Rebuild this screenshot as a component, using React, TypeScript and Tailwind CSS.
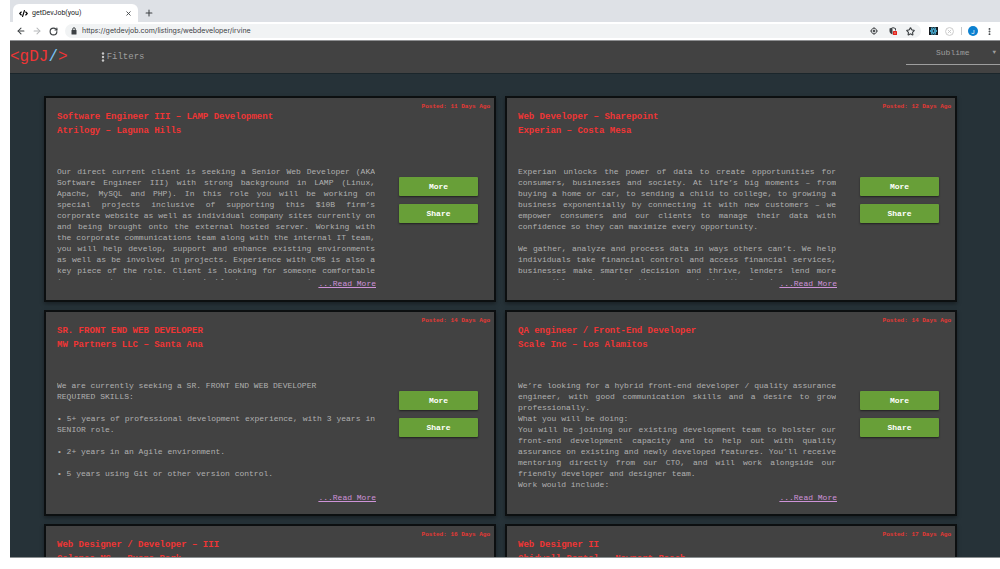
import { MoreVertical, ArrowLeft, ArrowRight, RotateCw, X, Plus, Star, CodeXml } from "lucide-react";

type Job = {
  title: string;
  company: string;
  days: number;
  body: string[];
};

const jobs: Job[] = [
  {
    title: "Software Engineer III – LAMP Development",
    company: "Atrilogy – Laguna Hills",
    days: 11,
    body: [
      "Our direct current client is seeking a Senior Web Developer (AKA Software Engineer III) with strong background in LAMP (Linux, Apache, MySQL and PHP). In this role you will be working on special projects inclusive of supporting this $10B firm’s corporate website as well as individual company sites currently on and being brought onto the external hosted server. Working with the corporate communications team along with the internal IT team, you will help develop, support and enhance existing environments as well as be involved in projects. Experience with CMS is also a key piece of the role. Client is looking for someone comfortable in an open team environment and able to manage a varied workload.",
    ],
  },
  {
    title: "Web Developer – Sharepoint",
    company: "Experian – Costa Mesa",
    days: 12,
    body: [
      "Experian unlocks the power of data to create opportunities for consumers, businesses and society. At life’s big moments – from buying a home or car, to sending a child to college, to growing a business exponentially by connecting it with new customers – we empower consumers and our clients to manage their data with confidence so they can maximize every opportunity.",
      "",
      "We gather, analyze and process data in ways others can’t. We help individuals take financial control and access financial services, businesses make smarter decision and thrive, lenders lend more responsibly, and organizations prevent identity fraud and crime.",
    ],
  },
  {
    title: "SR. FRONT END WEB DEVELOPER",
    company: "MW Partners LLC – Santa Ana",
    days: 14,
    body: [
      "We are currently seeking a SR. FRONT END WEB DEVELOPER",
      "REQUIRED SKILLS:",
      "",
      "• 5+ years of professional development experience, with 3 years in SENIOR role.",
      "",
      "• 2+ years in an Agile environment.",
      "",
      "• 5 years using Git or other version control.",
    ],
  },
  {
    title: "QA engineer / Front-End Developer",
    company: "Scale Inc – Los Alamitos",
    days: 14,
    body: [
      "We’re looking for a hybrid front-end developer / quality assurance engineer, with good communication skills and a desire to grow professionally.",
      "What you will be doing:",
      "You will be joining our existing development team to bolster our front-end development capacity and to help out with quality assurance on existing and newly developed features. You’ll receive mentoring directly from our CTO, and will work alongside our friendly developer and designer team.",
      "Work would include:",
    ],
  },
  {
    title: "Web Designer / Developer – III",
    company: "Calence MS – Buena Park",
    days: 16,
    body: [],
  },
  {
    title: "Web Designer II",
    company: "Chidwell Dental – Newport Beach",
    days: 17,
    body: [],
  },
];

function BrowserChrome() {
  return (
    <div className="shrink-0 bg-[#dee1e6] font-['Roboto',sans-serif] text-[#3c4043]">
      <div className="flex h-[22px] items-end">
        <div className="ml-[3px] flex h-[18px] w-[125px] items-center rounded-t-md bg-white px-[6px] text-[7px]">
          <CodeXml size={9} strokeWidth={3} className="text-black" />
          <span className="ml-1 flex-1 text-[#202124]">getDevJob(you)</span>
          <button aria-label="Close tab">
            <X size={7} strokeWidth={3} />
          </button>
        </div>
        <button aria-label="New tab" className="ml-[6px] flex h-[18px] items-center">
          <Plus size={10} strokeWidth={2.5} />
        </button>
      </div>
      <div className="flex h-[19px] items-center border-b border-[#8f9092] bg-white px-[6px]">
        <button aria-label="Back"><ArrowLeft size={10} strokeWidth={2.5} /></button>
        <button aria-label="Forward" className="ml-[6px] text-[#b6b8ba]"><ArrowRight size={10} strokeWidth={2.5} /></button>
        <button aria-label="Reload" className="ml-[7px]"><RotateCw size={9} strokeWidth={3} /></button>
        <div className="ml-[7px] flex h-[14px] flex-1 items-center rounded-full bg-[#f1f3f4] px-[6px]">
          <svg viewBox="0 0 12 16" className="h-2 w-[6px]">
            <rect x="1" y="6" width="10" height="9" rx="1" fill="#3c4043" />
            <path d="M3.5 7V4a2.5 2.5 0 0 1 5 0v3" fill="none" stroke="#3c4043" strokeWidth="2" />
          </svg>
          <input
            aria-label="Address"
            readOnly
            value="https://getdevjob.com/listings/webdeveloper/irvine"
            className="ml-[5px] min-w-0 flex-1 bg-transparent font-['Inter',sans-serif] text-[7px] leading-[12px] outline-none"
          />
          <svg viewBox="0 0 16 16" className="h-2 w-2" fill="none" stroke="#3c4043" strokeWidth="1.6">
            <circle cx="8" cy="8" r="5.5" />
            <circle cx="8" cy="8" r="2" fill="#3c4043" />
            <path d="M8 0v3M8 13v3M0 8h3M13 8h3" />
          </svg>
          <svg viewBox="0 0 16 16" className="ml-[11px] h-2 w-2">
            <path d="M7 1 1 3v5c0 4 3 6 6 7z" fill="#3c4043" />
            <path d="M7 1l6 2v4" fill="none" stroke="#3c4043" strokeWidth="2" />
            <rect x="8" y="8" width="8" height="8" rx="1" fill="#e2231a" />
            <rect x="11" y="11" width="2" height="2" fill="#fff" />
          </svg>
          <button aria-label="Bookmark" className="ml-[9px]"><Star size={9} strokeWidth={3} /></button>
        </div>
        <svg viewBox="0 0 18 16" className="ml-2 h-2 w-[9px]">
          <rect width="18" height="16" fill="#17191d" />
          <g fill="none" stroke="#48a8cc" strokeWidth="2">
            <ellipse cx="9" cy="8" rx="7" ry="2.6" />
            <ellipse cx="9" cy="8" rx="7" ry="2.6" transform="rotate(60 9 8)" />
            <ellipse cx="9" cy="8" rx="7" ry="2.6" transform="rotate(120 9 8)" />
          </g>
        </svg>
        <svg viewBox="0 0 16 16" className="ml-[7px] h-[9px] w-[9px]" fill="none" stroke="#c4c4c4" strokeWidth="1.5">
          <circle cx="8" cy="8" r="7" />
          <path d="m5 5 6 6M11 5l-6 6" />
        </svg>
        <span className="ml-[7px] h-2 w-px bg-[#c5c8cc]" />
        <span className="ml-[6px] flex h-[10px] w-[10px] items-center justify-center rounded-full bg-[#0b80d0] text-[6px] text-white">J</span>
        <button aria-label="Browser menu" className="ml-[7px]"><MoreVertical size={9} strokeWidth={3} /></button>
      </div>
    </div>
  );
}

function Header() {
  return (
    <header className="flex h-[33px] shrink-0 items-center border-b border-[#1b262b] bg-[#424242] text-[#9e9e9e]">
      <a href="#home" className="text-[16px] leading-[20px] text-[#f03535]">
        &lt;gDJ<span className="text-[#7cc4f5]">/</span>&gt;
      </a>
      <button className="ml-[33px] flex items-center text-[9px] leading-[12px]">
        <svg viewBox="0 0 8 20" className="h-[10px] w-1 fill-[#c8c8c8]">
          <circle cx="4" cy="3" r="2.4" />
          <circle cx="4" cy="10" r="2.4" />
          <circle cx="4" cy="17" r="2.4" />
        </svg>
        <span className="ml-[2px]">Filters</span>
      </button>
      <div className="mb-2 ml-auto flex h-6 w-[94px] items-center border-b border-[#9e9e9e]">
        <select
          aria-label="Theme"
          className="w-full appearance-none bg-transparent pl-[30px] text-[8px] leading-[12px] outline-none"
        >
          <option>Sublime</option>
        </select>
        <span aria-hidden className="mr-1 text-[6px] leading-[12px]">▼</span>
      </div>
    </header>
  );
}

function JobCard({ job }: { job: Job }) {
  const button =
    "h-[19px] w-full rounded-[1px] bg-[#689f38] text-[8px] font-bold leading-[12px] text-white shadow-[0_1px_2px_rgba(0,0,0,0.5)]";
  return (
    <article className="flex h-[206px] border-2 border-[#0c0f10] bg-[#424242] shadow-[0_2px_4px_rgba(0,0,0,0.35)]">
      <div className="flex w-[330px] shrink-0 flex-col pl-[11px] pt-3">
        <h2 className="text-[9px] font-bold leading-[14px] text-[#f03535]">
          {job.title}
          <br />
          {job.company}
        </h2>
        <div className="mt-7 h-[114px] w-[318px] overflow-hidden text-justify text-[8px] leading-[11px] text-[#b0b0b0]">
          {job.body.map((text, i) => (
            <p key={i} className="min-h-[11px]">{text}</p>
          ))}
        </div>
        <a href="#read" className="-mt-[2px] self-end bg-[#424242] text-[8px] leading-[12px] text-[#ce93d8] underline">
          ...Read More
        </a>
      </div>
      <div className="flex min-w-0 flex-1 flex-col">
        <p className="mr-1 mt-1 text-right text-[6px] font-bold leading-[10px] text-[#e53935]">
          Posted: {job.days} Days Ago
        </p>
        <div className="ml-[23px] mr-4 mt-[65px] flex flex-col gap-2">
          <button className={button}>More</button>
          <button className={button}>Share</button>
        </div>
      </div>
    </article>
  );
}

export default function App() {
  return (
    <div className="h-screen overflow-hidden bg-white pb-[11px] pl-[10px]">
      <div className="flex h-full flex-col overflow-hidden border-b border-[#8a8f91] bg-[#263238] font-['Liberation_Mono',monospace]">
        <BrowserChrome />
        <Header />
        <main className="min-h-0 flex-1 overflow-hidden pl-[34px] pr-[43px] pt-[22px]">
          <div className="grid grid-cols-2 gap-x-[9px] gap-y-2">
            {jobs.map((job) => (
              <JobCard key={job.title} job={job} />
            ))}
          </div>
        </main>
      </div>
    </div>
  );
}
